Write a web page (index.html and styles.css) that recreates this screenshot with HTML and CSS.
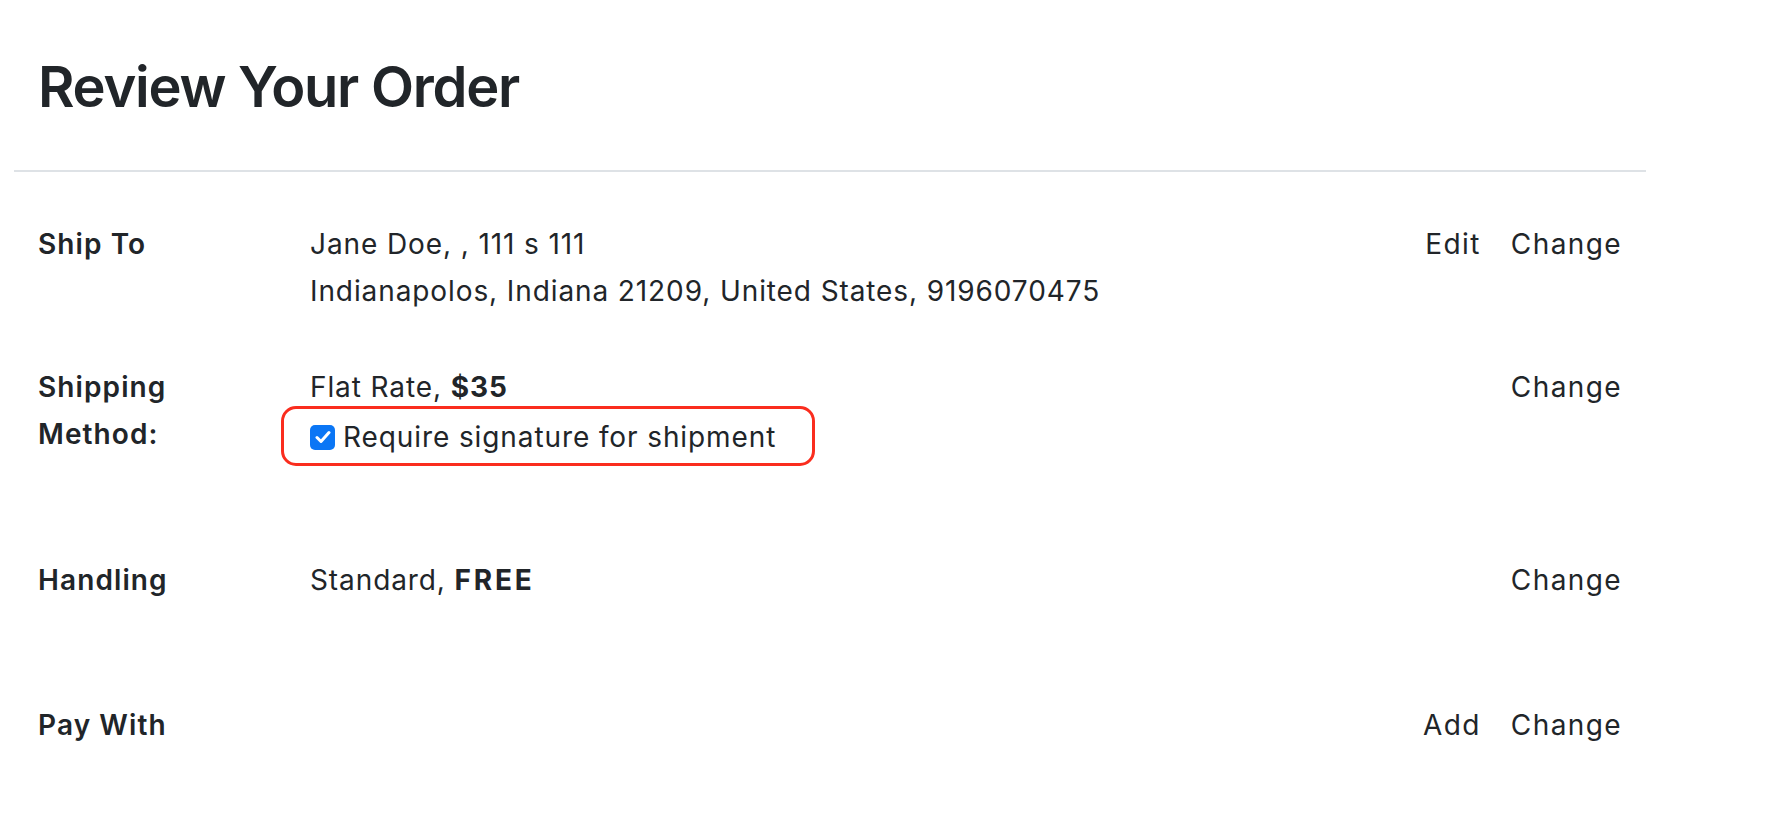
FILE: index.html
```html
<!DOCTYPE html>
<html lang="en">
<head>
<meta charset="utf-8">
<title>Review Your Order</title>
<link rel="stylesheet" href="styles.css">
</head>
<body>
<div class="page">
  <header class="page-header">
    <h1>Review Your Order</h1>
  </header>
  <section class="review">
    <div class="row">
      <div class="label">Ship To</div>
      <div class="value">Jane Doe, , 111 s 111<br>Indianapolos, Indiana 21209, United States, 9196070475</div>
      <div class="actions"><a href="#">Edit</a><a href="#">Change</a></div>
    </div>
    <div class="row row-shipping">
      <div class="label">Shipping Method:</div>
      <div class="value">
        <div>Flat Rate, <strong>$35</strong></div>
        <label class="signature"><span class="box"><svg width="16" height="14" viewBox="0 0 16 14"><path d="M2 7.5 L6 11.5 L14 2.5" fill="none" stroke="#fff" stroke-width="3" stroke-linecap="round" stroke-linejoin="round"/></svg></span>Require signature for shipment</label>
      </div>
      <div class="actions"><a href="#">Change</a></div>
    </div>
    <div class="row row-spaced">
      <div class="label">Handling</div>
      <div class="value">Standard, <strong class="caps">FREE</strong></div>
      <div class="actions"><a href="#">Change</a></div>
    </div>
    <div class="row">
      <div class="label">Pay With</div>
      <div class="value"></div>
      <div class="actions"><a href="#">Add</a><a href="#">Change</a></div>
    </div>
  </section>
</div>
</body>
</html>
```

FILE: styles.css
```css
html, body {
  margin: 0;
  padding: 0;
  background: #ffffff;
}

body {
  font-family: "Inter", "Noto Sans", sans-serif;
  color: #212529;
}

.page {
  margin-left: 14px;
  width: 1632px;
}

.page-header {
  padding: 54px 24px 49px 24px;
  border-bottom: 2px solid #dee2e6;
}

.page-header h1 {
  margin: 0;
  font-size: 56px;
  line-height: 67px;
  font-weight: 600;
  letter-spacing: -1.25px;
}

.review {
  padding: 49px 24px 0 24px;
}

.row {
  display: grid;
  grid-template-columns: 272px 1fr auto;
  align-items: start;
  margin-bottom: 49px;
  font-size: 28px;
  line-height: 47px;
  letter-spacing: 0.9px;
}

.row-shipping {
  padding-bottom: 47px;
}

.row-spaced {
  padding-bottom: 49px;
}

.label {
  font-weight: 600;
  max-width: 200px;
  letter-spacing: 1.1px;
}

.value strong {
  font-weight: 700;
}

.value .caps {
  letter-spacing: 2.8px;
}

.actions {
  display: flex;
  gap: 30px;
}

.actions a {
  color: #212529;
  text-decoration: none;
  letter-spacing: 1.4px;
}

.signature {
  position: relative;
  display: inline-flex;
  align-items: center;
  gap: 8px;
}

.signature::after {
  content: "";
  position: absolute;
  left: -29px;
  right: -39px;
  top: -8px;
  bottom: -5px;
  border: 3px solid #fa2d1e;
  border-radius: 15px;
  pointer-events: none;
}

.box {
  width: 25px;
  height: 25px;
  border-radius: 5px;
  background: #0b76f5;
  display: flex;
  align-items: center;
  justify-content: center;
  flex: none;
}
```
